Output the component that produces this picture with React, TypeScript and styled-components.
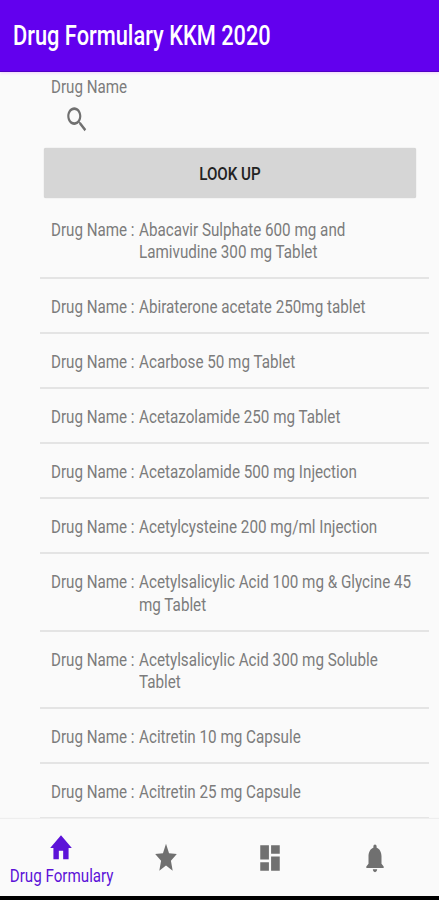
import React from "react";
import styled, { createGlobalStyle } from "styled-components";

const GlobalStyle = createGlobalStyle`
  * { box-sizing: border-box; }
  body { margin: 0; background: #fafafa; font-family: Roboto, "Liberation Sans", sans-serif; }
`;

const Screen = styled.div`
  display: flex;
  flex-direction: column;
  width: 439px;
  height: 900px;
  overflow: hidden;
  background: #fafafa;
  color: #7c7c7c;
  font-size: 19.2px;
  line-height: 22.5px;
`;

const Text = styled.span<{ $scale?: number; $center?: boolean }>`
  display: block;
  white-space: nowrap;
  transform: scaleX(${(p) => p.$scale ?? 0.79});
  transform-origin: ${(p) => (p.$center ? "center" : "left")};
`;

const AppBar = styled.header`
  display: flex;
  align-items: center;
  flex: none;
  height: 72px;
  padding: 1px 0 0 13px;
  background: #6200ee;
  border-bottom: 1px solid #5000c4;
  box-shadow: 0 1px 3px #f0d0ff;
  color: #fff;
  font-size: 27.4px;
  font-weight: 500;
`;

const Search = styled.section`
  flex: none;
  height: 76px;
  padding: 4px 0 0 51px;
`;

const SearchIcon = styled.svg`
  display: block;
  width: 26px;
  height: 33px;
  margin: 4px 0 0 13px;
  fill: #707070;
`;

const LookUpButton = styled.button`
  display: flex;
  flex: none;
  align-items: center;
  justify-content: center;
  width: 372px;
  height: 50px;
  margin: 0 0 0 44px;
  padding: 2px 0 0;
  border: 0;
  border-radius: 2px;
  background: #d6d6d6;
  box-shadow: 0 0 1px #bbb;
  color: #222;
  font: 500 19.2px/22.5px Roboto, sans-serif;
`;

const List = styled.ul`
  flex: none;
  width: 389px;
  margin: 4px 0 0 40px;
  padding: 0;
  list-style: none;
`;

const Row = styled.li`
  display: grid;
  grid-template-columns: 87.5px 1fr;
  padding: 17px 0 13.5px 11px;
  border-bottom: 2px solid #e4e4e4;

  &:first-child {
    padding-top: 16.5px;
  }
`;

const Cell = styled.div`
  min-width: 0;
`;

const BottomNav = styled.nav`
  display: grid;
  grid-template-columns: repeat(4, 104.5px);
  flex: 1;
  padding-left: 9px;
  border-bottom: 4px solid #000;
  box-shadow: 0 -1px 1px #eee;
`;

const NavItem = styled.a<{ $active?: boolean }>`
  display: flex;
  flex-direction: column;
  align-items: center;
  padding-top: ${(p) => (p.$active ? 12 : 22)}px;
  color: ${(p) => (p.$active ? "#5c12d8" : "#707070")};
`;

const NavIcon = styled.svg`
  display: block;
  flex: none;
  width: 26px;
  height: 34px;
  fill: currentColor;
`;

const drugs: string[][] = [
  ["Abacavir Sulphate 600 mg and", "Lamivudine 300 mg Tablet"],
  ["Abiraterone acetate 250mg tablet"],
  ["Acarbose 50 mg Tablet"],
  ["Acetazolamide 250 mg Tablet"],
  ["Acetazolamide 500 mg Injection"],
  ["Acetylcysteine 200 mg/ml Injection"],
  ["Acetylsalicylic Acid 100 mg & Glycine 45", "mg Tablet"],
  ["Acetylsalicylic Acid 300 mg Soluble", "Tablet"],
  ["Acitretin 10 mg Capsule"],
  ["Acitretin 25 mg Capsule"],
];

const navItems = [
  { label: "Drug Formulary", path: "M10 20v-6h4v6h5v-8h3L12 3 2 12h3v8z" },
  { path: "M12 17.27 18.18 21l-1.64-7.03L22 9.24l-7.19-.61L12 2 9.19 8.63 2 9.24l5.46 4.73L5.82 21z" },
  { path: "M3 13h8V3H3v10zm0 8h8v-6H3v6zm10 0h8V11h-8v10zm0-18v6h8V3h-8z" },
  { path: "M12 22c1.1 0 2-.9 2-2h-4c0 1.1.89 2 2 2zm6-6v-5c0-3.07-1.64-5.64-4.5-6.32V4c0-.83-.67-1.5-1.5-1.5s-1.5.67-1.5 1.5v.68C7.63 5.36 6 7.92 6 11v5l-2 2v1h16v-1l-2-2z" },
];

export default function App() {
  return (
    <>
      <GlobalStyle />
      <Screen>
        <AppBar>
          <Text $scale={0.796}>Drug Formulary KKM 2020</Text>
        </AppBar>
        <Search>
          <Text>Drug Name</Text>
          <SearchIcon viewBox="0 0 24 24" preserveAspectRatio="none">
            <path d="M15.5 14h-.79l-.28-.27C15.41 12.59 16 11.11 16 9.5 16 5.91 13.09 3 9.5 3S3 5.91 3 9.5 5.91 16 9.5 16c1.61 0 3.09-.59 4.23-1.57l.27.28v.79l5 4.99L20.49 19l-4.99-5zm-6 0C7.01 14 5 11.99 5 9.5S7.01 5 9.5 5 14 7.01 14 9.5 11.99 14 9.5 14z" />
          </SearchIcon>
        </Search>
        <LookUpButton>
          <Text $center>LOOK UP</Text>
        </LookUpButton>
        <List>
          {drugs.map((lines) => (
            <Row key={lines[0]}>
              <Text>Drug Name :</Text>
              <Cell>
                {lines.map((line) => (
                  <Text key={line} $scale={0.793}>{line}</Text>
                ))}
              </Cell>
            </Row>
          ))}
        </List>
        <BottomNav>
          {navItems.map((item) => (
            <NavItem key={item.path} $active={Boolean(item.label)}>
              <NavIcon viewBox="0 0 24 24" preserveAspectRatio="none">
                <path d={item.path} />
              </NavIcon>
              {item.label && <Text $center>{item.label}</Text>}
            </NavItem>
          ))}
        </BottomNav>
      </Screen>
    </>
  );
}
